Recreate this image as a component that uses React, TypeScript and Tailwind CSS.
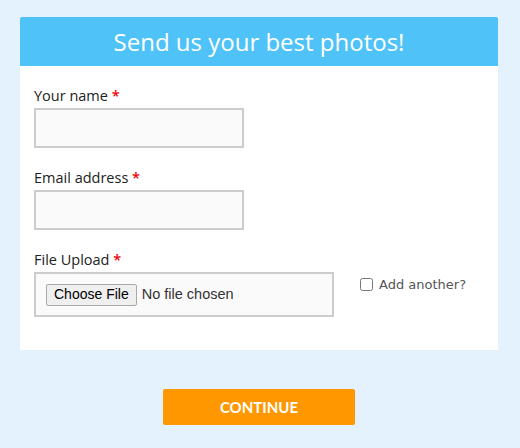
export default function App() {
  return (
    <div className="min-h-[448px] bg-[#e3f2fc] pt-[17px] font-['Open_Sans',sans-serif]">
      <div className="ml-[20px] w-[478px]">
        <div className="flex h-[49px] items-center justify-center rounded-t-[2px] bg-[#4fc3f7]">
          <h1 className="text-[24px] leading-[30px] text-white">Send us your best photos!</h1>
        </div>
        <div className="bg-white px-[14px] pt-[20px] pb-[33px]">
          <Label text="Your name" />
          <input className="mt-[2px] block h-[40px] w-[210px] border-2 border-[#cccccc] bg-[#fafafa] outline-none" />
          <div className="mt-[20px]">
            <Label text="Email address" />
          </div>
          <input className="mt-[2px] block h-[40px] w-[210px] border-2 border-[#cccccc] bg-[#fafafa] outline-none" />
          <div className="mt-[20px]">
            <Label text="File Upload" />
          </div>
          <div className="mt-[2px] flex items-start">
            <div className="flex h-[45px] w-[300px] items-center border-2 border-[#cccccc] bg-[#fafafa] pl-[10px] font-['Liberation_Sans',sans-serif] text-[14px]">
              <span className="flex h-[22px] items-center rounded-[2px] border border-[#a9a9a9] bg-[#efefef] px-[7px] text-black">
                Choose File
              </span>
              <span className="ml-[5px] text-[14.5px] text-[#333]">No file chosen</span>
            </div>
            <label className="ml-[26px] mt-[3px] flex items-center gap-[6px] font-['DejaVu_Sans',sans-serif] text-[13px] text-[#555]">
              <input type="checkbox" className="m-0 h-[13px] w-[13px]" />
              Add another?
            </label>
          </div>
        </div>
        <div className="flex justify-center pt-[39px]">
          <button className="h-[36px] w-[192px] rounded-[2px] bg-[#ff9800] font-['Lato',sans-serif] text-[15px] font-bold text-white">
            CONTINUE
          </button>
        </div>
      </div>
    </div>
  );
}

function Label({ text }: { text: string }) {
  return (
    <div className="text-[14.5px] leading-[20px] text-[#222]">
      {text} <span className="font-semibold text-[#e00]">*</span>
    </div>
  );
}
